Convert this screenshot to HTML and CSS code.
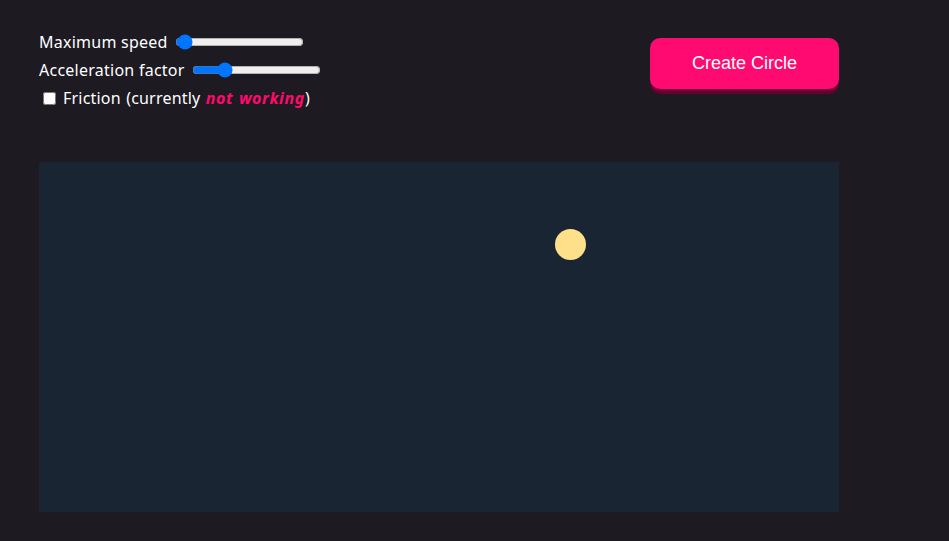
FILE: index.html
```html
<!DOCTYPE html>
<html>
<head>
<meta charset="utf-8">
<link rel="stylesheet" href="styles.css">
</head>
<body>
<div class="app">
  <div class="top">
    <div class="controls">
      <label class="row"><span class="lbl">Maximum speed</span><input type="range" class="range" min="0" max="100" value="2"></label>
      <label class="row"><span class="lbl">Acceleration factor</span><input type="range" class="range" min="0" max="100" value="22"></label>
      <label class="row check"><input type="checkbox" class="box"><span>Friction (currently <em class="warn">not working</em>)</span></label>
    </div>
    <button class="create">Create Circle</button>
  </div>
  <div class="stage">
    <div class="ball"></div>
  </div>
</div>
</body>
</html>
```
FILE: styles.css
```css
html, body {
  margin: 0;
  padding: 0;
  background: #1d1a22;
  width: 949px;
  height: 541px;
  overflow: hidden;
}
.app {
  padding: 28px 0 0 39px;
  width: 800px;
  font-family: "Noto Sans", "Open Sans", sans-serif;
  color: #ffffff;
}
.top {
  display: flex;
  justify-content: space-between;
  align-items: flex-start;
  height: 134px;
}
.controls {
  display: flex;
  flex-direction: column;
}
.row {
  display: flex;
  align-items: center;
  height: 28px;
  font-size: 16px;
  gap: 7px;
  white-space: nowrap;
}
.lbl {
  letter-spacing: 0.25px;
}
.range {
  width: 129px;
  margin: 0;
  accent-color: #0075ff;
}
.check {
  gap: 0;
}
.check span {
  word-spacing: 1px;
  letter-spacing: 0.2px;
}
.box {
  width: 13px;
  height: 13px;
  margin: 0 7px 0 4px;
}
.warn {
  color: #ff0a6c;
  font-weight: 700;
  font-style: italic;
  letter-spacing: 0.6px;
}
.create {
  margin-top: 10px;
  width: 189px;
  height: 51px;
  border: none;
  border-radius: 10px;
  background: #ff0a70;
  color: #ffffff;
  font-family: "Liberation Sans", Arial, sans-serif;
  font-size: 18px;
  box-shadow: 0 5px 0 #6a0030;
  cursor: pointer;
}
.stage {
  position: relative;
  width: 800px;
  height: 350px;
  background: #1a2534;
}
.ball {
  position: absolute;
  left: 516px;
  top: 67px;
  width: 31px;
  height: 31px;
  border-radius: 50%;
  background: #ffe08a;
}
```
